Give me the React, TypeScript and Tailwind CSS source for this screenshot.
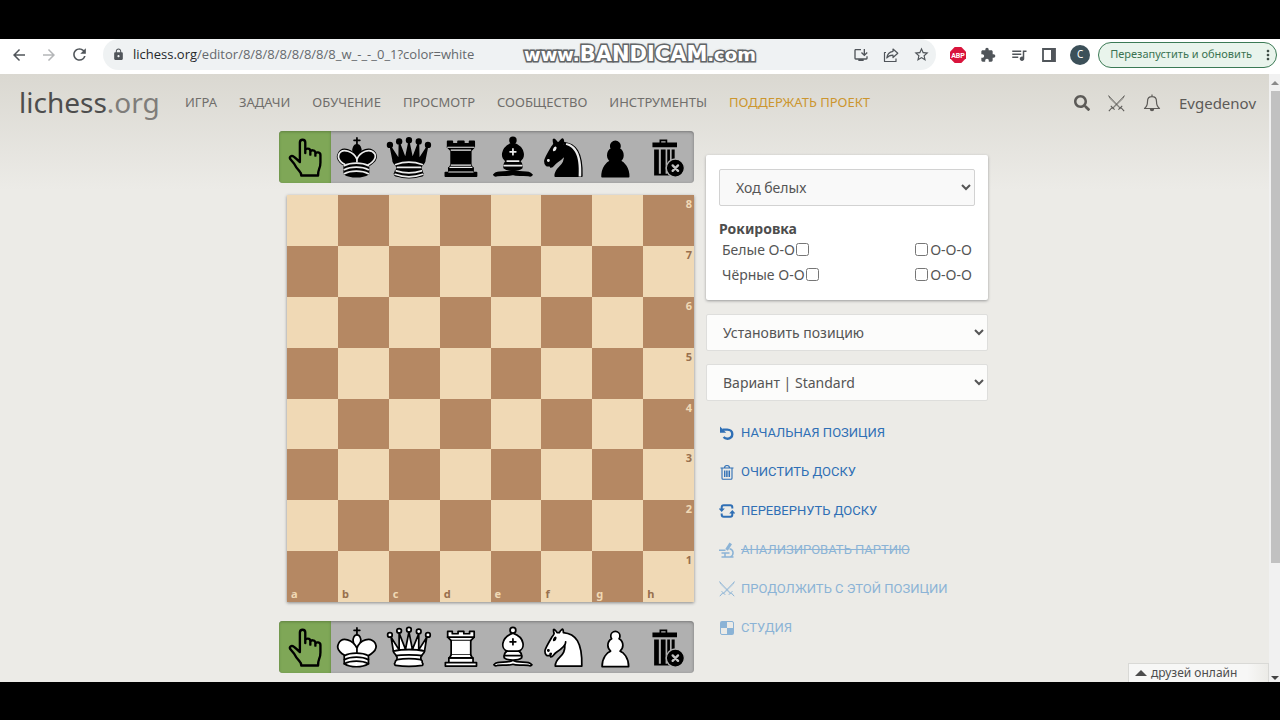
import { useState, type ReactNode } from 'react';
import { FaSearch } from 'react-icons/fa';
import {
  MdArrowBack,
  MdArrowForward,
  MdExtension,
  MdLock,
  MdMoreVert,
  MdOutlineInstallDesktop,
  MdQueueMusic,
  MdRefresh,
  MdStarBorder,
} from 'react-icons/md';

type Color = 'white' | 'black';
type Role = 'king' | 'queen' | 'rook' | 'bishop' | 'knight' | 'pawn';

const ROLES: Role[] = ['king', 'queen', 'rook', 'bishop', 'knight', 'pawn'];
const FILES = ['a', 'b', 'c', 'd', 'e', 'f', 'g', 'h'];
const RANKS = [8, 7, 6, 5, 4, 3, 2, 1];
const MENU = ['ИГРА', 'ЗАДАЧИ', 'ОБУЧЕНИЕ', 'ПРОСМОТР', 'СООБЩЕСТВО', 'ИНСТРУМЕНТЫ'];

const LIGHT = '#ececec';
const KING_BODY =
  'M11.5 37c5.5 3.5 15.5 3.5 21 0v-7s9-4.5 6-10.5c-4-6.5-13.5-3.5-16 4V27v-3.5c-3.5-7.5-13-10.5-16-4-3 6 5 10 5 10V37z';
const QUEEN_BASE =
  'M9 26c0 2 1.5 2 2.5 4 1 1.5 1 1 .5 3.5-1.5 1-1.5 2.5-1.5 2.5-1.5 1.5.5 2.5.5 2.5 6.5 1 16.5 1 23 0 0 0 1.5-1 0-2.5 0 0 .5-1.5-1-2.5-.5-2.5-.5-2 .5-3.5 1-2 2.5-2 2.5-4-8.5-1.5-18.5-1.5-27 0z';

function pieceShape(role: Role, black: boolean): ReactNode {
  const line = black ? LIGHT : '#000';
  switch (role) {
    case 'king':
      return (
        <>
          <path d="M22.5 11.63V6M20 8h5" fill="none" />
          <path d="M22.5 25s4.5-7.5 3-10.5c0 0-1-2.5-3-2.5s-3 2.5-3 2.5c-1.5 3 3 10.5 3 10.5" />
          <path d={KING_BODY} />
          {black && (
            <path
              fill="none"
              stroke={LIGHT}
              d="M32 29.5s8.5-4 6.03-9.65C34.15 14 25 18 22.5 24.5l.01 2.1-.01-2.1C20 18 9.906 14 6.997 19.85c-2.497 5.65 4.853 9 4.853 9"
            />
          )}
          <path fill="none" stroke={line} d="M11.5 30c5.5-3 15.5-3 21 0m-21 3.5c5.5-3 15.5-3 21 0m-21 3.5c5.5-3 15.5-3 21 0" />
        </>
      );
    case 'queen':
      return black ? (
        <>
          <g stroke="none">
            <circle cx="6" cy="12" r="2.75" />
            <circle cx="14" cy="9" r="2.75" />
            <circle cx="22.5" cy="8" r="2.75" />
            <circle cx="31" cy="9" r="2.75" />
            <circle cx="39" cy="12" r="2.75" />
          </g>
          <path d="M9 26c8.5-1.5 21-1.5 27 0l2.5-12.5L31 25l-.3-14.1-5.2 13.6-3-14.5-3 14.5-5.2-13.6L14 25 6.5 13.5 9 26z" />
          <path d={QUEEN_BASE} />
          <path fill="none" d="M11 38.5a35 35 1 0 0 23 0" />
          <path
            fill="none"
            stroke={LIGHT}
            d="M11 29a35 35 1 0 1 23 0m-21.5 2.5h20m-21 3a35 35 1 0 0 22 0m-23 3a35 35 1 0 0 24 0"
          />
        </>
      ) : (
        <>
          <path d="M8 12a2 2 0 1 1-4 0 2 2 0 1 1 4 0zm16.5-4.5a2 2 0 1 1-4 0 2 2 0 1 1 4 0zM41 12a2 2 0 1 1-4 0 2 2 0 1 1 4 0zM16 8.5a2 2 0 1 1-4 0 2 2 0 1 1 4 0zM33 9a2 2 0 1 1-4 0 2 2 0 1 1 4 0z" />
          <path d="M9 26c8.5-1.5 21-1.5 27 0l2-12-7 11V11l-5.5 13.5-3-15-3 15-5.5-14V25L7 14l2 12z" />
          <path d={QUEEN_BASE} />
          <path fill="none" d="M11.5 30c3.5-1 18.5-1 22 0M12 33.5c6-1 15-1 21 0" />
        </>
      );
    case 'rook':
      return (
        <>
          <path d="M9 39h27v-3H9v3zm3-3v-4h21v4H12zm-1-22V9h4v2h5V9h5v2h5V9h4v5" />
          <path d="M34 14l-3 3H14l-3-3" />
          <path d="M31 17v12.5H14V17" />
          <path d="M31 29.5l1.5 2.5h-20l1.5-2.5" />
          <path d="M11 14h23" />
          {black && <path fill="none" stroke={LIGHT} strokeWidth="1" d="M12 35.5h21m-20-4h19m-18-2h17m-17-13h17M11 14h23" />}
        </>
      );
    case 'bishop':
      return (
        <>
          <path d="M9 36c3.39-.97 10.11.43 13.5-2 3.39 2.43 10.11 1.03 13.5 2 0 0 1.65.54 3 2-.68.97-1.65.99-3 .5-3.39-.97-10.11.46-13.5-1-3.39 1.46-10.11.03-13.5 1-1.354.49-2.323.47-3-.5 1.354-1.94 3-2 3-2z" />
          <path d="M15 32c2.5 2.5 12.5 2.5 15 0 .5-1.5 0-2 0-2 0-2.5-2.5-4-2.5-4 5.5-1.5 6-11.5-5-15.5-11 4-10.5 14-5 15.5 0 0-2.5 1.5-2.5 4 0 0-.5.5 0 2z" />
          <path d="M25 8a2.5 2.5 0 1 1-5 0 2.5 2.5 0 1 1 5 0z" />
          <path fill="none" stroke={line} d="M17.5 26h10M15 30h15m-7.5-14.5v5M20 18h5" />
        </>
      );
    case 'knight':
      return (
        <>
          <path d="M22 10c10.5 1 16.5 8 16 29H15c0-9 10-6.5 8-21" />
          <path d="M24 18c.38 2.91-5.55 7.37-8 9-3 2-2.82 4.34-5 4-1.042-.94 1.41-3.04 0-3-1 0 .19 1.23-1 2-1 0-4.003 1-4-4 0-2 6-12 6-12s1.89-1.9 2-3.5c-.73-.994-.5-2-.5-3 1-1 3 2.5 3 2.5h2s.78-1.992 2.5-3c1 0 1 3 1 3" />
          <path
            fill={line}
            stroke={line}
            d="M9.5 25.5a.5.5 0 1 1-1 0 .5.5 0 1 1 1 0zm5.433-9.75a.5 1.5 30 1 1-.866-.5.5 1.5 30 1 1 .866.5z"
          />
          {black && (
            <path
              fill={LIGHT}
              stroke="none"
              d="M24.55 10.4l-.45 1.45.5.15c3.15 1 5.65 2.49 7.9 6.75S35.75 29.06 35.25 39l-.05.5h2.25l.05-.5c.5-10.06-.88-16.85-3.25-21.34-2.37-4.49-5.79-6.64-9.19-7.16l-.51-.1z"
            />
          )}
        </>
      );
    default:
      return (
        <path d="M22 9c-2.21 0-4 1.79-4 4 0 .89.29 1.71.78 2.38C16.83 16.5 15.5 18.59 15.5 21c0 2.03.94 3.84 2.41 5.03C14.91 27.09 10.5 31.58 10.5 39.5h23c0-7.92-4.41-12.41-7.41-13.47C27.56 24.84 28.5 23.03 28.5 21c0-2.41-1.33-4.5-3.28-5.62.49-.67.78-1.49.78-2.38 0-2.21-1.79-4-4-4z" />
      );
  }
}

function Piece({ role, color }: { role: Role; color: Color }) {
  return (
    <svg
      viewBox="0 0 45 45"
      className="h-full w-full"
      fill={color === 'white' ? '#fff' : '#000'}
      stroke="#000"
      strokeWidth="1.5"
      strokeLinecap="round"
      strokeLinejoin="round"
    >
      {pieceShape(role, color === 'black')}
    </svg>
  );
}

function HandIcon() {
  return (
    <svg viewBox="0 0 154 154" className="h-full w-full" fill="none" stroke="#000" strokeWidth="7" strokeLinecap="round" strokeLinejoin="round">
      <path d="M62 90V34c0-11 16-11 16 0v31-7c0-8 15-8 15 1v11-7c0-8 14-8 15 1v9-5c2-7 15-6 15 3v22c0 7-1 14-4 20-2 5-3 12-3 19H66c0-6-2-10-6-14-6-6-11-13-15-21L34 84c-5-8 3-13 10-8 6 4 11 9 18 16" />
    </svg>
  );
}

function TrashCellIcon() {
  return (
    <svg viewBox="0 0 154 154" className="h-full w-full">
      <path d="M31 34h21v-9h23v9h29v14H31zM57 30v4h13v-4z" fillRule="evenodd" />
      <path d="M36 55h14v77H36zM56 55h14v77H56zM75 55h8v77h-8zM88 55h9v40h-9zM36 127h50v5H36z" />
      <circle cx="99" cy="110" r="27" fill="#000" stroke="#b0b0b0" strokeWidth="4" />
      <path d="M91 102l16 16m0-16l-16 16" stroke="#c4c4c4" strokeWidth="7" strokeLinecap="round" />
    </svg>
  );
}

function SwordsIcon({ className }: { className?: string }) {
  return (
    <svg viewBox="0 0 16 16" className={className} fill="none" stroke="currentColor" strokeWidth="1">
      <path d="M.6.6l12 12.6M15.4.6l-12 12.6M.6.6l1.2 2.6 9.6 9.4M15.4.6l-1.2 2.6-9.6 9.4" strokeWidth=".7" />
      <path d="M2.6 10.2l3.6 3.6M13.4 10.2l-3.6 3.6M3.6 12L.8 15.2M12.4 12l2.8 3.2" />
    </svg>
  );
}

function BellIcon() {
  return (
    <svg viewBox="0 0 18 18" className="size-[18px]" fill="none" stroke="currentColor" strokeWidth="1.2">
      <path d="M9 .5v2M1.5 14.5c2.4-1.8 3-3.6 3-7 0-2.8 1.8-4.8 4.5-4.8s4.5 2 4.5 4.8c0 3.4.6 5.2 3 7z" strokeLinejoin="round" />
      <path d="M6.8 15a2.2 2.2 0 0 0 4.4 0z" fill="currentColor" stroke="none" />
    </svg>
  );
}

function ShareIcon() {
  return (
    <svg viewBox="0 0 16 16" className="size-4" fill="none" stroke="currentColor" strokeWidth="1.2" strokeLinejoin="round">
      <path d="M3 5.5H1.5v9H13v-3" />
      <path d="M10 2l4.8 4.2L10 10.5V8.2c-3 0-4.8.8-6.2 2.8.4-3.8 2.4-6.2 6.2-6.7z" />
    </svg>
  );
}

function UndoIcon() {
  return (
    <svg viewBox="0 0 16 16" className="size-4" fill="none" stroke="currentColor" strokeWidth="2.4">
      <path d="M3.5 4.6h4.8c3 0 5 2 5 4.6s-2 4.6-4.800 4.600c-1.600 0-3-.6-3.900-1.700" />
      <path d="M1 1.600v6.200h6.200z" fill="currentColor" stroke="none" />
    </svg>
  );
}

function BinIcon() {
  return (
    <svg viewBox="0 0 16 16" className="size-4" fill="none" stroke="currentColor" strokeWidth="1.1">
      <path d="M1.5 4h13M5.5 4c0-3.400 5-3.400 5 0M3 4v10.200q0 1 1 1h8q1 0 1-1V4M5.600 6.500v6.500M7.300 6.500v6.500M8.900 6.500v6.500M10.500 6.500v6.500" />
    </svg>
  );
}

function FlipIcon() {
  return (
    <svg viewBox="0 0 16 16" className="size-4" fill="none" stroke="currentColor" strokeWidth="2">
      <path d="M2.700 6V4.200q0-2 2-2h6.600q2 0 2 2V5.500M13.300 10v1.800q0 2-2 2H4.700q-2 0-2-2v-1.300" />
      <path d="M-.4 5.500h6.200L2.700 9zM16.400 10.500h-6.200L13.300 7z" fill="currentColor" stroke="none" />
    </svg>
  );
}

function MicroscopeIcon() {
  return (
    <svg viewBox="0 0 16 16" className="size-4" fill="none" stroke="currentColor" strokeWidth="1.5">
      <path d="M10.500.5L6.300 7l2.500 1.700 4.200-6.500z" fill="currentColor" stroke="none" />
      <path d="M0 8.300h6.500M2.500 11h8M2.500 15h12M10.500 6.700c4.500.8 4.600 6.300 1 8.300M6 11v4" />
    </svg>
  );
}

function StudyIcon() {
  return (
    <svg viewBox="0 0 16 16" className="size-4" fill="currentColor">
      <path d="M3 1h5v7H1V3q0-2 2-2zM8 8h7v5q0 2-2 2H8z" />
      <path d="M8 1.500h5q1.500 0 1.500 1.500v5M1.500 8v5q0 1.500 1.500 1.500h5" fill="none" stroke="currentColor" />
    </svg>
  );
}

const ACTIONS = [
  { label: 'НАЧАЛЬНАЯ ПОЗИЦИЯ', icon: <UndoIcon />, disabled: false, strike: false },
  { label: 'ОЧИСТИТЬ ДОСКУ', icon: <BinIcon />, disabled: false, strike: false },
  { label: 'ПЕРЕВЕРНУТЬ ДОСКУ', icon: <FlipIcon />, disabled: false, strike: false },
  { label: 'АНАЛИЗИРОВАТЬ ПАРТИЮ', icon: <MicroscopeIcon />, disabled: true, strike: true },
  { label: 'ПРОДОЛЖИТЬ С ЭТОЙ ПОЗИЦИИ', icon: <SwordsIcon className="size-4" />, disabled: true, strike: false },
  { label: 'СТУДИЯ', icon: <StudyIcon />, disabled: true, strike: false },
];

function BrowserBar() {
  return (
    <div className="flex h-[35px] shrink-0 items-center bg-white pr-[3px] pb-1 text-[#50555a]">
      <div className="flex w-[103px] shrink-0 items-center gap-3 pl-[10px]">
        <button aria-label="Назад"><MdArrowBack className="size-[18px]" /></button>
        <button aria-label="Вперёд" className="text-[#b4b6b8]"><MdArrowForward className="size-[18px]" /></button>
        <button aria-label="Обновить"><MdRefresh className="size-[19px]" /></button>
      </div>
      <div className="flex h-[31px] flex-1 items-center rounded-full bg-[#eff2f3] pr-[6px] pl-[9px]">
        <MdLock className="size-[13px]" />
        <div className="ml-2 flex-1 font-['Open_Sans',sans-serif] text-[13px] text-[#65696d]">
          <span className="text-[#25282b]">lichess.org</span>/editor/8/8/8/8/8/8/8/8_w_-_-_0_1?color=white
        </div>
        <div className="flex items-center gap-[14px]">
          <button aria-label="Установить"><MdOutlineInstallDesktop className="size-4" /></button>
          <button aria-label="Поделиться"><ShareIcon /></button>
          <button aria-label="В закладки"><MdStarBorder className="size-[17px]" /></button>
        </div>
      </div>
      <div className="ml-[14px] flex items-center gap-[14px]">
        <svg viewBox="0 0 16 16" className="size-4">
          <path d="M4.7 0h6.6L16 4.7v6.6L11.3 16H4.7L0 11.3V4.7z" fill="#d9143c" />
          <text x="8" y="10.6" textAnchor="middle" fontSize="7" fontWeight="700" fill="#fff" fontFamily="Roboto, sans-serif">ABP</text>
        </svg>
        <MdExtension className="size-4" />
        <MdQueueMusic className="size-[18px]" />
        <svg viewBox="0 0 14 14" className="size-[14px]">
          <path d="M1 1h12v12H1z" fill="none" stroke="currentColor" strokeWidth="1.8" />
          <path d="M9 1h4v12H9z" fill="currentColor" />
        </svg>
        <span className="flex size-5 items-center justify-center rounded-full bg-[#3c5059] text-[10px] text-white">C</span>
      </div>
      <button className="ml-2 flex h-[26px] items-center gap-2 rounded-full border border-[#3b7a55] bg-[#e9f4ec] pl-[11px] text-[11px] text-[#3b7352]">
        Перезапустить и обновить
        <MdMoreVert className="size-4 text-[#3d4a43]" />
      </button>
    </div>
  );
}

function SiteHeader() {
  return (
    <header className="flex h-14 items-center pr-[13px] pl-[19px]">
      <a href="#" className="w-[166px] text-[28px] text-[#4d4d4d]">
        lichess<span className="text-[#7f7d7a]">.org</span>
      </a>
      <nav className="flex flex-1 items-center gap-[22px] pt-[2px] text-[13px] text-[#706e6b]">
        {MENU.map((item) => (
          <a key={item} href="#">{item}</a>
        ))}
        <a href="#" className="text-[#cc962f]">ПОДДЕРЖАТЬ ПРОЕКТ</a>
      </nav>
      <div className="flex items-center gap-[18px] pt-[2px] text-[#5c5a57]">
        <button aria-label="Поиск"><FaSearch className="size-4" /></button>
        <button aria-label="Вызовы"><SwordsIcon className="size-[17px]" /></button>
        <button aria-label="Уведомления"><BellIcon /></button>
        <a href="#" className="text-[15px]">Evgedenov</a>
      </div>
    </header>
  );
}

function Spare({ color }: { color: Color }) {
  return (
    <div className="grid h-[52px] w-[415px] grid-cols-8 overflow-hidden rounded-sm bg-[#b0b0b0] shadow-[inset_0_1px_3px_#777]">
      <button aria-label="Курсор" className="bg-[#7fa757] shadow-[inset_0_1px_3px_#5f8040]"><HandIcon /></button>
      {ROLES.map((role) => (
        <button key={role} aria-label={`${color} ${role}`}><Piece role={role} color={color} /></button>
      ))}
      <button aria-label="Удалить"><TrashCellIcon /></button>
    </div>
  );
}

function Board() {
  return (
    <div className="ml-2 grid aspect-square w-[407px] grid-cols-8 grid-rows-8 shadow-[0_1px_3px_#8a8a8a]">
      {RANKS.map((rank, y) =>
        FILES.map((file, x) => {
          const light = (x + y) % 2 === 0;
          return (
            <div
              key={file + rank}
              className={`flex flex-col justify-between px-1 text-[11px] leading-[16px] font-bold ${
                light ? 'bg-[#f0d9b5] text-[#98704e]' : 'bg-[#b58863] text-[#f0d9b5]'
              }`}
            >
              <span className="-mr-[2px] pt-px text-right">{x === 7 && rank}</span>
              <span>{rank === 1 && file}</span>
            </div>
          );
        }),
      )}
    </div>
  );
}

function CastlingRow({ label, id }: { label: string; id: string }) {
  return (
    <div className="flex items-center justify-between px-[3px]">
      <label className="flex items-center gap-px">
        {label} <input type="checkbox" name={`${id}-short`} className="size-[13px]" />
      </label>
      <label className="flex items-center gap-[2px]">
        <input type="checkbox" name={`${id}-long`} className="size-[13px]" /> O-O-O
      </label>
    </div>
  );
}

function Tools() {
  const [turn, setTurn] = useState('white');
  return (
    <div className="mt-[25px] ml-3 w-[282px] text-[14px] text-[#555]">
      <section className="rounded-xs bg-white px-[13px] pt-[14px] pb-[15px] shadow-[0_1px_3px_#9a9a9a]">
        <select
          aria-label="Очередь хода"
          value={turn}
          onChange={(e) => setTurn(e.target.value)}
          className="h-[37px] w-full rounded-xs border border-[#d2d2d2] bg-[#f9f9f9] px-3"
        >
          <option value="white">Ход белых</option>
          <option value="black">Ход чёрных</option>
        </select>
        <div className="mt-3 leading-[21px]">
          <strong className="text-[#4d4d4d]">Рокировка</strong>
          <div className="flex flex-col gap-1">
            <CastlingRow label="Белые O-O" id="white" />
            <CastlingRow label="Чёрные O-O" id="black" />
          </div>
        </div>
      </section>
      <select aria-label="Позиция" className="mt-[14px] h-[37px] w-full rounded-xs border border-[#dededc] bg-[#fcfcfb] px-3">
        <option>Установить позицию</option>
      </select>
      <select aria-label="Вариант" className="mt-[13px] h-[37px] w-full rounded-xs border border-[#dededc] bg-[#fcfcfb] px-3">
        <option>Вариант | Standard</option>
      </select>
      <div className="mt-3 flex flex-col">
        {ACTIONS.map((a) => (
          <button
            key={a.label}
            disabled={a.disabled}
            className={`flex h-[39px] items-center gap-[6px] px-[13px] font-[Roboto,sans-serif] text-[13px] ${
              a.disabled ? 'text-[#8bb3d6]' : 'text-[#2f6fb5]'
            } ${a.strike ? 'line-through' : ''}`}
          >
            {a.icon}
            {a.label}
          </button>
        ))}
      </div>
    </div>
  );
}

function Scrollbar() {
  return (
    <div className="flex w-[11px] shrink-0 flex-col items-center bg-[#f1f1f1]">
      <svg viewBox="0 0 11 17" className="h-[17px] w-[11px]"><path d="M2 11l4-4 4 4z" fill="#8a8a8a" /></svg>
      <div className="w-[9px] flex-[472] self-end bg-[#c1c1c1]" />
      <div className="flex-[111]" />
      <svg viewBox="0 0 11 8" className="h-2 w-[11px]"><path d="M2 2l4 4 4-4z" fill="#444" /></svg>
    </div>
  );
}

export default function App() {
  return (
    <div className="relative flex h-screen flex-col bg-black pt-[39px] pb-[38px] font-['Noto_Sans',sans-serif]">
      <BrowserBar />
      <div className="flex min-h-0 flex-1">
        <div className="relative flex-1 overflow-hidden bg-[#ecebe7] bg-[linear-gradient(to_bottom,#dad8d1,#ecebe7_116px)]">
          <SiteHeader />
          <main className="flex justify-center pr-[2px]">
            <div className="mt-[1px]">
              <Spare color="black" />
              <div className="pt-3 pb-[19px]"><Board /></div>
              <Spare color="white" />
            </div>
            <Tools />
          </main>
          <button className="absolute right-0 bottom-0 flex h-[19px] w-[141px] items-center gap-1 border border-b-0 border-[#d9d9d6] bg-[linear-gradient(to_right,#f7f7f6_85%,#ecebe7)] pl-[6px] text-[12px] whitespace-nowrap text-[#4d4d4d]">
            <svg viewBox="0 0 12 6" className="h-[6px] w-3"><path d="M0 6l6-6 6 6z" fill="currentColor" /></svg>
            друзей онлайн
          </button>
        </div>
        <Scrollbar />
      </div>
      {/* recorder watermark, floats over the address bar */}
      <div className="pointer-events-none absolute inset-x-0 top-[42px] text-center font-['DejaVu_Sans',sans-serif] text-[18px] leading-6 font-bold text-white [paint-order:stroke_fill] [-webkit-text-stroke:3px_#5b6063] [text-shadow:0_0_3px_#777]">
        www.<span className="text-[21px]">BANDICAM</span>.com
      </div>
    </div>
  );
}
